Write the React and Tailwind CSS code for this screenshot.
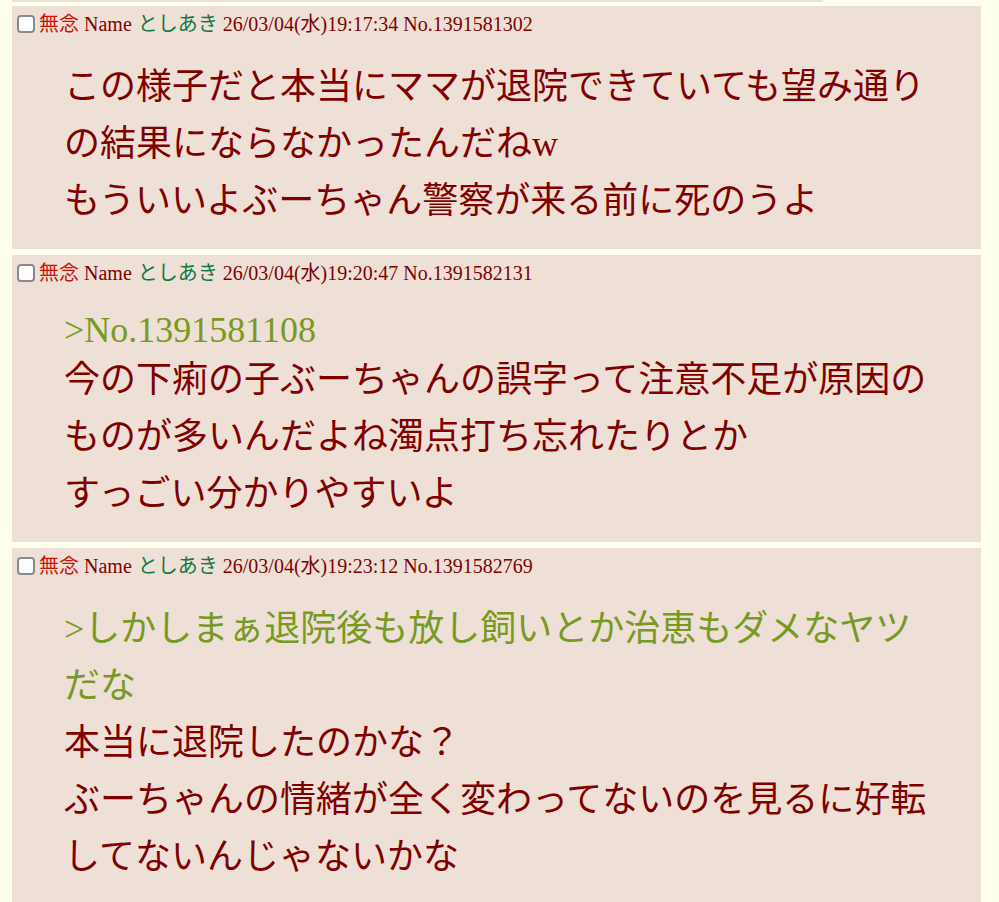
const posts = [
    {
        date: '26/03/04(水)19:17:34',
        no: 'No.1391581302',
        lines: [
            { text: 'この様子だと本当にママが退院できていても望み通り' },
            { text: 'の結果にならなかったんだねw' },
            { text: 'もういいよぶーちゃん警察が来る前に死のうよ' },
        ],
    },
    {
        date: '26/03/04(水)19:20:47',
        no: 'No.1391582131',
        lines: [
            { text: '>No.1391581108', quote: true, latin: true },
            { text: '今の下痢の子ぶーちゃんの誤字って注意不足が原因の' },
            { text: 'ものが多いんだよね濁点打ち忘れたりとか' },
            { text: 'すっごい分かりやすいよ' },
        ],
    },
    {
        date: '26/03/04(水)19:23:12',
        no: 'No.1391582769',
        lines: [
            { text: '>しかしまぁ退院後も放し飼いとか治恵もダメなヤツ', quote: true },
            { text: 'だな', quote: true },
            { text: '本当に退院したのかな？' },
            { text: 'ぶーちゃんの情緒が全く変わってないのを見るに好転' },
            { text: 'してないんじゃないかな' },
        ],
    },
];

const Post = ({ post }) => (
    <div className="bg-[#EEE0D6] pt-2 pb-[19px] pl-[5px]">
        {/* header row */}
        <div className="flex items-center h-[20px] text-[20px] leading-[20px] text-[#800000] whitespace-nowrap">
            <span className="w-[18px] h-[18px] rounded-[4px] border-2 border-[#8a8a8a] bg-white shrink-0" />
            <span className="ml-[4px] text-[#CC1105]">無念</span>
            <span className="ml-[5px]">Name</span>
            <span className="ml-[6px] text-[#117743]">としあき</span>
            <span className="ml-[5px]">{post.date}</span>
            <span className="ml-[5px]">{post.no}</span>
        </div>

        {/* body */}
        <div className="mt-[25px] pl-[47px] text-[36px] text-[#800000] whitespace-nowrap">
            {post.lines.map((line, i) => (
                <div
                    key={i}
                    className={`${line.latin ? 'leading-[44px]' : 'leading-[57px]'} ${line.quote ? 'text-[#789922]' : ''}`}
                >
                    {line.text}
                </div>
            ))}
        </div>
    </div>
);

export default function App() {
    return (
        <div className="min-h-screen bg-[#FFFFEE] pl-3 font-['Liberation_Serif','Noto_Sans_CJK_JP',serif]">
            {/* tail of the previous post */}
            <div className="h-[2px] w-[811px] bg-[#EEE0D6]" />
            <div className="flex flex-col gap-[6px] mt-1 w-[969px]">
                {posts.map((p) => (
                    <Post key={p.no} post={p} />
                ))}
            </div>
        </div>
    );
}
